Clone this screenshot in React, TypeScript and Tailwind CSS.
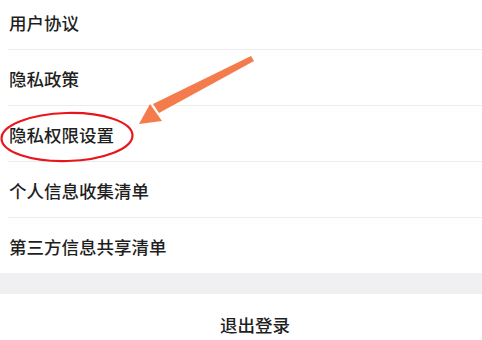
import React from "react";

const items = ["用户协议", "隐私政策", "隐私权限设置", "个人信息收集清单", "第三方信息共享清单"];

export default function App() {
  return (
    <div
      className="relative w-[482px] h-[340px] overflow-hidden bg-white text-[#1f1f1f]"
      style={{ fontFamily: '"Noto Sans CJK SC", "Noto Sans", sans-serif' }}
    >
      <div className="-mt-[6px] flex flex-col">
        {items.map((t, i) => (
          <div key={t} className="flex flex-col">
            <div className="h-[55px] flex items-center pl-[9px] text-[17.5px] font-medium leading-none pt-[2px]">{t}</div>
            {i < items.length - 1 && <div className="ml-[8px] h-px bg-[#ececec]" />}
          </div>
        ))}
        <div className="h-[21px] bg-[#f0f0f2]" />
        <div className="h-[62px] flex items-center justify-center pl-[28px] text-[17.5px] font-medium leading-none">退出登录</div>
      </div>
      <svg className="absolute left-0 top-0 pointer-events-none" width="482" height="340" viewBox="0 0 482 340">
        <ellipse cx="67" cy="137" rx="65.5" ry="24" fill="none" stroke="#e8161b" strokeWidth="2.2" transform="rotate(-1.5 67 137)" />
        <polygon points="251,56 254,61 159,113 153,104" fill="#f47b4b" />
        <polygon points="139,124 150,104 162,121" fill="#f47b4b" />
      </svg>
    </div>
  );
}
